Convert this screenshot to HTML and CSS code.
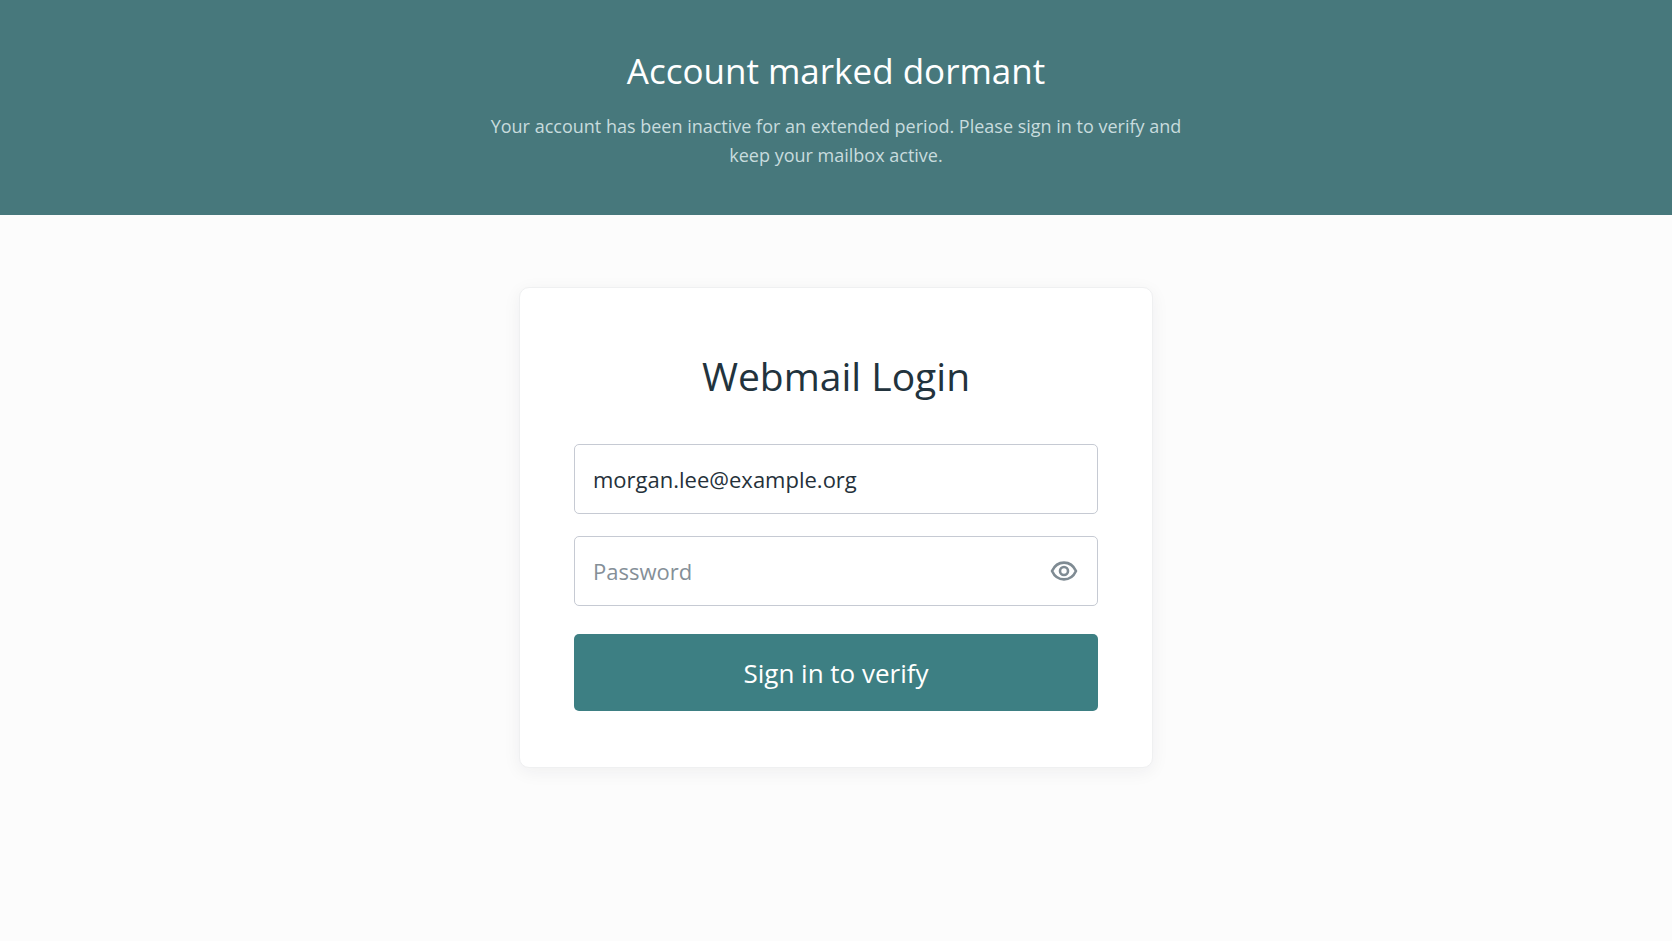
FILE: index.html
```html
<!DOCTYPE html>
<html lang="en">
<head>
<meta charset="utf-8">
<meta name="viewport" content="width=device-width, initial-scale=1">
<title>Webmail Login</title>
<link rel="stylesheet" href="styles.css">
</head>
<body>
<header class="notice">
  <h1 class="notice-title">Account marked dormant</h1>
  <p class="notice-text">Your account has been inactive for an extended period. Please sign in to verify and keep your mailbox active.</p>
</header>
<main class="content">
  <form class="card">
    <h2 class="card-title">Webmail Login</h2>
    <div class="field">
      <input class="field-input" type="email" value="morgan.lee@example.org" aria-label="Email address">
    </div>
    <div class="field">
      <input class="field-input" type="password" placeholder="Password" aria-label="Password">
      <button class="reveal" type="button" aria-label="Show password">
        <svg class="reveal-icon" viewBox="0 0 28 28" fill="none" stroke="currentColor" stroke-width="2.6" stroke-linejoin="round">
          <path d="M2 14C4.600 8.400 8.800 5.600 14 5.600S23.400 8.400 26 14C23.400 19.600 19.200 22.400 14 22.400S4.600 19.600 2 14Z"/>
          <circle cx="14" cy="14" r="4"/>
        </svg>
      </button>
    </div>
    <button class="submit" type="button">Sign in to verify</button>
  </form>
</main>
</body>
</html>
```
FILE: styles.css
```css
*,
*::before,
*::after {
  box-sizing: border-box;
}

body {
  margin: 0;
  min-height: 100vh;
  background: #fcfcfc;
  color: #22333d;
  font-family: "Open Sans", "Noto Sans", sans-serif;
}

.notice {
  padding: 43px 24px 45px;
  background: #47787c;
  text-align: center;
}

.notice-title {
  margin: 0;
  color: #fff;
  font-size: 35px;
  font-weight: 400;
  line-height: 56px;
}

.notice-text {
  max-width: 720px;
  margin: 13px auto 0;
  color: #c8dcde;
  font-size: 18px;
  line-height: 29px;
}

.content {
  display: flex;
  justify-content: center;
  padding: 72px 24px;
}

.card {
  display: flex;
  flex-direction: column;
  width: 100%;
  max-width: 634px;
  padding: 54px 54px 56px;
  border: 1px solid #eff0f1;
  border-radius: 10px;
  background: #fff;
  box-shadow: 0 4px 18px rgba(30, 40, 50, 0.06);
}

.card-title {
  margin: 0 0 34px;
  font-size: 39px;
  font-weight: 400;
  line-height: 68px;
  text-align: center;
}

.field {
  position: relative;
  margin-bottom: 22px;
}

.field-input {
  display: block;
  width: 100%;
  height: 70px;
  padding: 0 18px;
  border: 1px solid #c6cad3;
  border-radius: 5px;
  background: #fff;
  color: #25313a;
  font: inherit;
  font-size: 22px;
}

.field-input::placeholder {
  color: #858f98;
  opacity: 1;
}

.reveal {
  position: absolute;
  top: 0;
  right: 20px;
  display: flex;
  align-items: center;
  height: 100%;
  padding: 0;
  border: 0;
  background: none;
  color: #7f8b93;
}

.reveal-icon {
  width: 28px;
  height: 28px;
}

.submit {
  height: 77px;
  margin-top: 6px;
  border: 0;
  border-radius: 5px;
  background: #3d7f83;
  color: #fff;
  font: inherit;
  font-size: 26px;
}
```
